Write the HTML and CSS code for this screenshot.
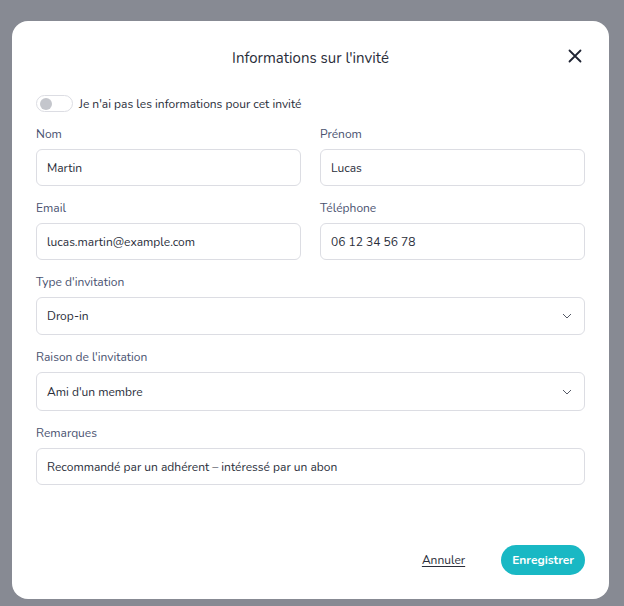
FILE: index.html
```html
<!DOCTYPE html>
<html lang="fr">
<head>
<meta charset="utf-8">
<title>Informations sur l'invité</title>
<link rel="stylesheet" href="styles.css">
</head>
<body>
<div class="backdrop">
  <div class="modal">
    <div class="header">
      <h2 class="title">Informations sur l'invité</h2>
      <button class="close" aria-label="Fermer">
        <svg width="14" height="14" viewBox="0 0 14 14"><path d="M1.5 1.5L12.5 12.5M12.5 1.5L1.5 12.5" stroke="#1f2433" stroke-width="1.8" stroke-linecap="round" fill="none"/></svg>
      </button>
    </div>
    <label class="toggle-row">
      <span class="toggle"><span class="knob"></span></span>
      <span class="toggle-label">Je n'ai pas les informations pour cet invité</span>
    </label>
    <div class="form">
      <div class="row two">
        <div class="field">
          <div class="label">Nom</div>
          <div class="input">Martin</div>
        </div>
        <div class="field">
          <div class="label">Prénom</div>
          <div class="input">Lucas</div>
        </div>
      </div>
      <div class="row two">
        <div class="field">
          <div class="label">Email</div>
          <div class="input">lucas.martin@example.com</div>
        </div>
        <div class="field">
          <div class="label">Téléphone</div>
          <div class="input">06 12 34 56 78</div>
        </div>
      </div>
      <div class="field">
        <div class="label">Type d'invitation</div>
        <div class="input select"><span>Drop-in</span>
          <svg class="chev" width="10" height="6" viewBox="0 0 10 6"><path d="M1 1L5 5L9 1" stroke="#555a66" stroke-width="1" fill="none"/></svg>
        </div>
      </div>
      <div class="field">
        <div class="label">Raison de l'invitation</div>
        <div class="input select tall"><span>Ami d'un membre</span>
          <svg class="chev" width="10" height="6" viewBox="0 0 10 6"><path d="M1 1L5 5L9 1" stroke="#555a66" stroke-width="1" fill="none"/></svg>
        </div>
      </div>
      <div class="field">
        <div class="label">Remarques</div>
        <div class="input">Recommandé par un adhérent – intéressé par un abon</div>
      </div>
    </div>
    <div class="footer">
      <a class="cancel" href="#">Annuler</a>
      <button class="save">Enregistrer</button>
    </div>
  </div>
</div>
</body>
</html>
```
FILE: styles.css
```css
html, body {
  margin: 0;
  padding: 0;
}
body {
  background: #878a93;
  font-family: "Nunito", "Lato", "Noto Sans", sans-serif;
  color: #2a2e3a;
}
.backdrop {
  padding: 21px 0 0 12px;
  height: 606px;
  box-sizing: border-box;
}
.modal {
  width: 597px;
  height: 578px;
  box-sizing: border-box;
  background: #fff;
  border-radius: 16px;
  padding: 0 24px 24px;
  display: flex;
  flex-direction: column;
}
.header {
  position: relative;
  height: 47px;
  display: flex;
  align-items: flex-end;
  justify-content: center;
}
.title {
  margin: 0;
  font-size: 15px;
  font-weight: 400;
  line-height: 20px;
  color: #2a2e3a;
}
.close {
  position: absolute;
  right: 3px;
  top: 28px;
  width: 14px;
  height: 14px;
  padding: 0;
  border: 0;
  background: none;
  display: flex;
}
.toggle-row {
  margin-top: 27px;
  display: flex;
  align-items: center;
  gap: 6px;
  height: 17px;
}
.toggle {
  width: 33px;
  height: 15px;
  border: 1px solid #dcdde3;
  border-radius: 9px;
  display: flex;
  align-items: center;
  padding-left: 2px;
  box-sizing: content-box;
}
.knob {
  width: 12px;
  height: 12px;
  border-radius: 50%;
  background: #c4c6cc;
  margin-left: 1px;
}
.toggle-label {
  font-size: 12px;
  color: #2a2e3a;
}
.form {
  margin-top: 14px;
  display: flex;
  flex-direction: column;
  gap: 14px;
}
.row.two {
  display: grid;
  grid-template-columns: 1fr 1fr;
  column-gap: 19px;
}
.field {
  display: flex;
  flex-direction: column;
  gap: 7px;
}
.label {
  font-size: 12px;
  line-height: 16px;
  color: #4a5270;
}
.input {
  height: 37px;
  box-sizing: border-box;
  border: 1px solid #dcdde3;
  border-radius: 6px;
  padding: 0 10px;
  display: flex;
  align-items: center;
  font-size: 12px;
  color: #2a2e3a;
}
.select {
  height: 38px;
  justify-content: space-between;
  padding-right: 12px;
}
.select.tall {
  height: 39px;
}
.footer {
  margin-top: auto;
  display: flex;
  justify-content: flex-end;
  align-items: center;
  gap: 36px;
}
.cancel {
  font-size: 12px;
  color: #2a2e3a;
  text-decoration: underline;
  text-underline-offset: 2px;
}
.save {
  height: 30px;
  padding: 0 11px;
  border: 0;
  border-radius: 15px;
  background: #19b8c4;
  color: #fff;
  font-family: inherit;
  font-size: 12px;
  font-weight: 700;
}
```
